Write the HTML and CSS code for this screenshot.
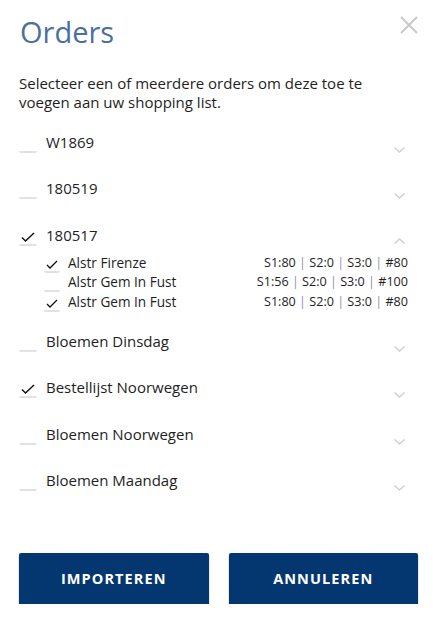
FILE: index.html
```html
<!DOCTYPE html>
<html lang="nl">
<head>
<meta charset="utf-8">
<title>Orders</title>
<link rel="stylesheet" href="styles.css">
</head>
<body>
<div class="modal">
  <header class="modal-head">
    <h1 class="title">Orders</h1>
    <button class="close" aria-label="Sluiten">
      <svg width="18" height="18" viewBox="0 0 18 18"><path d="M1 1 L17 17 M17 1 L1 17" stroke="#c9c9c9" stroke-width="2" fill="none"/></svg>
    </button>
  </header>
  <p class="intro">Selecteer een of meerdere orders om deze toe te voegen aan uw shopping list.</p>
  <ul class="orders">
    <li class="order">
      <div class="order-row">
        <span class="cb"></span><span class="name">W1869</span>
        <svg class="chev" width="11" height="6" viewBox="0 0 11 6"><path d="M0.5 0.5 L5.5 5 L10.5 0.5" stroke="#cfcfcf" stroke-width="1.4" fill="none"/></svg>
      </div>
    </li>
    <li class="order">
      <div class="order-row">
        <span class="cb"></span><span class="name">180519</span>
        <svg class="chev" width="11" height="6" viewBox="0 0 11 6"><path d="M0.5 0.5 L5.5 5 L10.5 0.5" stroke="#cfcfcf" stroke-width="1.4" fill="none"/></svg>
      </div>
    </li>
    <li class="order open">
      <div class="order-row">
        <span class="cb checked"><svg width="14" height="10" viewBox="0 0 14 10"><path d="M1 5.5 L4.5 9 L13 1" stroke="#111" stroke-width="1.4" fill="none"/></svg></span><span class="name">180517</span>
        <svg class="chev up" width="11" height="6" viewBox="0 0 11 6"><path d="M0.5 5.5 L5.5 1 L10.5 5.5" stroke="#cfcfcf" stroke-width="1.4" fill="none"/></svg>
      </div>
      <ul class="lines">
        <li class="line">
          <span class="cb small checked"><svg width="12" height="9" viewBox="0 0 12 9"><path d="M1 5 L4 8 L11 1" stroke="#111" stroke-width="1.3" fill="none"/></svg></span>
          <span class="line-name">Alstr Firenze</span>
          <span class="line-info">S1:80 <i>|</i> S2:0 <i>|</i> S3:0 <i>|</i> #80</span>
        </li>
        <li class="line">
          <span class="cb small"></span>
          <span class="line-name">Alstr Gem In Fust</span>
          <span class="line-info">S1:56 <i>|</i> S2:0 <i>|</i> S3:0 <i>|</i> #100</span>
        </li>
        <li class="line">
          <span class="cb small checked"><svg width="12" height="9" viewBox="0 0 12 9"><path d="M1 5 L4 8 L11 1" stroke="#111" stroke-width="1.3" fill="none"/></svg></span>
          <span class="line-name">Alstr Gem In Fust</span>
          <span class="line-info">S1:80 <i>|</i> S2:0 <i>|</i> S3:0 <i>|</i> #80</span>
        </li>
      </ul>
    </li>
    <li class="order">
      <div class="order-row">
        <span class="cb"></span><span class="name">Bloemen Dinsdag</span>
        <svg class="chev" width="11" height="6" viewBox="0 0 11 6"><path d="M0.5 0.5 L5.5 5 L10.5 0.5" stroke="#cfcfcf" stroke-width="1.4" fill="none"/></svg>
      </div>
    </li>
    <li class="order">
      <div class="order-row">
        <span class="cb checked"><svg width="14" height="10" viewBox="0 0 14 10"><path d="M1 5.5 L4.5 9 L13 1" stroke="#111" stroke-width="1.4" fill="none"/></svg></span><span class="name">Bestellijst Noorwegen</span>
        <svg class="chev" width="11" height="6" viewBox="0 0 11 6"><path d="M0.5 0.5 L5.5 5 L10.5 0.5" stroke="#cfcfcf" stroke-width="1.4" fill="none"/></svg>
      </div>
    </li>
    <li class="order">
      <div class="order-row">
        <span class="cb"></span><span class="name">Bloemen Noorwegen</span>
        <svg class="chev" width="11" height="6" viewBox="0 0 11 6"><path d="M0.5 0.5 L5.5 5 L10.5 0.5" stroke="#cfcfcf" stroke-width="1.4" fill="none"/></svg>
      </div>
    </li>
    <li class="order">
      <div class="order-row">
        <span class="cb"></span><span class="name">Bloemen Maandag</span>
        <svg class="chev" width="11" height="6" viewBox="0 0 11 6"><path d="M0.5 0.5 L5.5 5 L10.5 0.5" stroke="#cfcfcf" stroke-width="1.4" fill="none"/></svg>
      </div>
    </li>
  </ul>
  <div class="actions">
    <button class="btn">IMPORTEREN</button>
    <button class="btn">ANNULEREN</button>
  </div>
</div>
</body>
</html>
```
FILE: styles.css
```css
* { box-sizing: border-box; }
html, body { margin: 0; padding: 0; background: #fff; }
body {
  font-family: "Open Sans", "Noto Sans", sans-serif;
  color: #1e1e1e;
}
.modal {
  width: 437px;
  padding: 12px 19px 0 19px;
}
.modal-head {
  display: flex;
  justify-content: space-between;
  align-items: flex-start;
}
.title {
  margin: 0 0 0 1px;
  font-size: 29px;
  line-height: 40px;
  font-weight: 400;
  color: #4b6f9e;
}
.close {
  border: 0;
  background: none;
  padding: 0;
  margin: 4px 0 0 0;
  width: 18px;
  height: 18px;
  display: block;
}
.close svg { display: block; }
.intro {
  margin: 22px 0 0 0;
  font-size: 15px;
  line-height: 19px;
  color: #1e1e1e;
  padding-right: 20px;
}
.orders {
  list-style: none;
  margin: 18px 0 0 0;
  padding: 0;
}
.order { margin-bottom: 22.4px; }
.order-row {
  display: flex;
  align-items: flex-start;
  height: 24px;
}
.cb {
  flex: none;
  width: 18px;
  height: 23px;
  border-bottom: 2px solid #e2e2e2;
  border-radius: 0 0 2px 2px;
  margin-right: 9px;
  display: flex;
  align-items: flex-end;
  justify-content: center;
  padding-bottom: 2px;
}
.cb svg { display: block; }
.name {
  flex: 1;
  font-size: 15px;
  line-height: 24px;
}
.chev {
  flex: none;
  margin: 17px 13px 0 0;
  display: block;
}
.chev.up { margin-top: 15px; }
.order.open { margin-bottom: 16px; }
.lines {
  list-style: none;
  margin: 7px 0 0 0;
  padding: 0 0 0 25px;
}
.line {
  display: flex;
  align-items: flex-start;
  height: 19.7px;
  line-height: 18px;
}
.cb.small {
  width: 16px;
  height: 19px;
  margin-right: 8px;
  padding-bottom: 2px;
}
.line-name { flex: 1; font-size: 13.6px; }
.line-info {
  margin-right: 10px;
  font-size: 12.6px;
  color: #1e1e1e;
}
.line-info i {
  font-style: normal;
  color: #8a8fa8;
}
.actions {
  display: flex;
  gap: 20px;
  margin-top: 61px;
}
.btn {
  flex: 1;
  height: 51px;
  border: 0;
  border-radius: 2px;
  background: #04376f;
  color: #fff;
  font-family: "Open Sans", "Noto Sans", sans-serif;
  font-weight: 700;
  font-size: 14.5px;
  letter-spacing: 1.1px;
  box-shadow: 0 2px 1px #0a1a2c;
}
```
